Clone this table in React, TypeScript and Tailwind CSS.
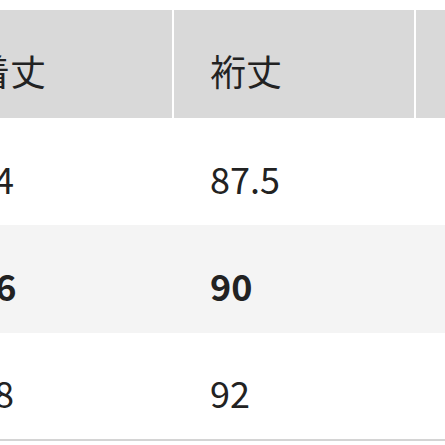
const HEAD = ['着丈', '裄丈', ''];

const ROWS: { cells: string[]; bold?: boolean; bg: string; h: string }[] = [
  { cells: ['74', '87.5', ''], bg: 'bg-white', h: 'h-[107px]' },
  { cells: ['76', '90', ''], bold: true, bg: 'bg-[#f4f4f4]', h: 'h-[108px]' },
  { cells: ['78', '92', ''], bg: 'bg-white', h: 'h-[106px]' },
];

export default function App() {
  return (
    <div
      className="w-[445px] h-[445px] overflow-hidden bg-white pt-[10px] text-[#222]"
      style={{ fontFamily: '"Noto Sans CJK JP", "Noto Sans", sans-serif' }}
    >
      <div className="ml-[-62px] w-[720px] border-b-2 border-[#d4d4d4]">
        <div className="grid grid-cols-[234px_240px_240px] gap-x-[2px] h-[108px]">
          {HEAD.map((h, i) => (
            <div
              key={i}
              className="bg-[#d9d9d9] flex items-center pl-[36px] pt-[12px] text-[36px] leading-none"
            >
              {h}
            </div>
          ))}
        </div>
        {ROWS.map((row, r) => (
          <div
            key={r}
            className={`grid grid-cols-[234px_240px_240px] gap-x-[2px] ${row.h} ${row.bg}`}
          >
            {row.cells.map((c, i) => (
              <div
                key={i}
                className={`${row.bg} flex items-center pl-[36px] pt-[12px] text-[36px] leading-none ${row.bold ? 'font-bold' : ''}`}
              >
                {c}
              </div>
            ))}
          </div>
        ))}
      </div>
    </div>
  );
}
